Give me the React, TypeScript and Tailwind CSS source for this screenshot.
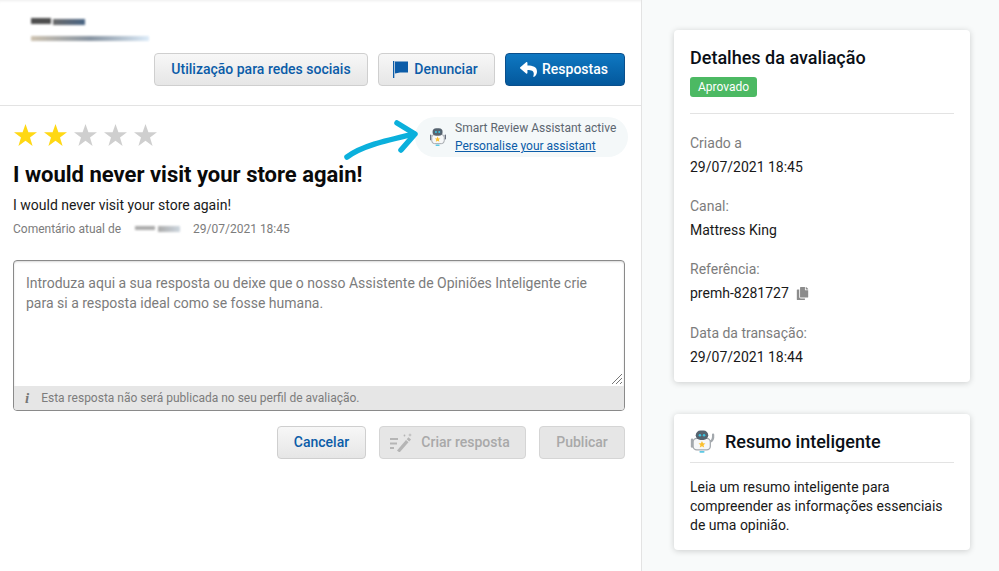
import { FaReply, FaCopy } from "react-icons/fa";

function Bot({ size = 24, wave }: { size?: number; wave?: boolean }) {
  return (
    <svg width={size} height={size} viewBox="0 0 24 24" className="shrink-0">
      {wave ? (
        <path d="M19 12c2.500 0 3.500-3 3.200-6.500" fill="none" stroke="#a3a8ad" strokeWidth="2.200" strokeLinecap="round" />
      ) : (
        <rect x="20" y="9" width="1.600" height="6" rx="0.800" fill="#6b7280" />
      )}
      {wave ? (
        <rect x="0.800" y="9" width="2.400" height="9" rx="1.200" fill="#a3a8ad" />
      ) : (
        <rect x="2.400" y="9" width="1.600" height="7" rx="0.800" fill="#6b7280" />
      )}
      <rect x={wave ? 3 : 4.500} y="9" width={wave ? 16.500 : 15} height="11" rx="3.500" fill="#f6f7f8" stroke="#a3a8ad" strokeWidth="1.200" />
      <rect x="5.500" y="1.500" width="12" height="9" rx="4.500" fill="#56636f" />
      <circle cx="9.500" cy="6" r="1.200" fill="#3cc4e0" />
      <circle cx="13.500" cy="6" r="1.200" fill="#3cc4e0" />
      <path d="M11.500 11.500l1 2.200 2.300.2-1.800 1.500.6 2.300-2.100-1.200-2.100 1.200.6-2.300-1.800-1.500 2.300-.2z" fill="#fbc02d" />
      <rect x="9" y="21" width="5" height="1.800" rx="0.900" fill="#5cc8e4" />
    </svg>
  );
}

function Wand() {
  return (
    <svg width="23" height="19" viewBox="0 0 23 19" fill="#b5b5b5" className="shrink-0">
      <rect x="0" y="5" width="8" height="2" />
      <rect x="0" y="9.500" width="7" height="2" />
      <rect x="0" y="14" width="4" height="2" />
      <path d="M7 17.500L16 7l2.500 2.200-9 10.300z" />
      <path d="M16.700 6.200l1.800-2 2.500 2.200-1.800 2z" />
      <path d="M20 0l.5 1.500 1.500.5-1.500.5-.5 1.500-.5-1.500-1.500-.5 1.500-.5z" />
      <circle cx="14.500" cy="2.500" r="0.900" />
    </svg>
  );
}

function Flag() {
  return (
    <svg width="15" height="17" viewBox="0 0 15 17" fill="#0b5ca8" className="shrink-0">
      <rect x="0" y="0" width="1.300" height="17" />
      <path d="M2 0.500H15V11.500H7L2 12.500z" />
    </svg>
  );
}

function Stars({ count }: { count: number }) {
  return (
    <div className="flex gap-[7px] pl-[1px] pt-[7px]">
      {[0, 1, 2, 3, 4].map((i) => (
        <svg key={i} width="23" height="22" viewBox="0 0 23 22" fill={i < count ? "#ffd814" : "#cfcfcf"}>
          <path d="M11.500 0l2.900 8.200H23l-7 5.200 2.600 8.600-7.100-5.200L4.400 22 7 13.400 0 8.200h8.600z" />
        </svg>
      ))}
    </div>
  );
}

function Detail({ label, value, copy, last }: { label: string; value: string; copy?: boolean; last?: boolean }) {
  return (
    <div className={last ? "mt-[20px]" : "mb-[19px]"}>
      <div className="text-[14px] leading-[20px] text-[#7c7c7c]">{label}</div>
      <div className="mt-[4px] flex items-center text-[14px] leading-[20px] text-[#191919]">
        {value}
        {copy && <FaCopy size={13} className="ml-[7px] text-[#8c8c8c]" />}
      </div>
    </div>
  );
}

const btn =
  "flex h-[33px] items-center justify-center rounded-[4px] border border-[#cfcfcf] bg-gradient-to-b from-[#f7f7f7] to-[#e6e6e6] text-[14px] font-medium text-[#0b5ca8]";

export default function App() {
  return (
    <div className="flex h-[571px] w-[999px] overflow-hidden bg-[#f8fafa] font-['Roboto',sans-serif]">
      <div className="relative w-[642px] shrink-0 border-r border-[#e3e3e3] bg-white shadow-[inset_0_3px_3px_-2px_rgba(0,0,0,0.07)]">
        <div className="h-[106px] border-b border-[#e3e3e3] pr-[16px]">
          <div className="h-[53px] pl-[31px] pt-[18px]">
            <div className="flex h-[8px] w-[54px] gap-[2px] opacity-80 blur-[1px]">
              <div className="h-[6px] w-[20px] bg-[#222]" />
              <div className="mt-[1px] h-[6px] w-[32px] bg-gradient-to-r from-[#444] to-[#1c3f66]" />
            </div>
            <div className="mt-[10px] h-[5px] w-[118px] bg-gradient-to-r from-[#b9a98f] via-[#55677a] to-[#cfe4f7] opacity-70 blur-[1.2px]" />
          </div>
          <div className="flex justify-end gap-[10px]">
            <button className={`${btn} w-[214px]`}>Utilização para redes sociais</button>
            <button className={`${btn} w-[117px] gap-[6px] pr-[2px]`}>
              <Flag />
              Denunciar
            </button>
            <button className="flex h-[33px] w-[120px] items-center justify-center gap-[5px] rounded-[4px] border border-[#0a4f8c] bg-gradient-to-b from-[#0f78c2] to-[#04589c] pr-[2px] text-[14px] font-medium text-white">
              <FaReply size={17} />
              Respostas
            </button>
          </div>
        </div>

        <div className="px-[13px] pr-[16px]">
          <div className="flex items-start justify-between pt-[11px]">
            <Stars count={2} />
            <div className="mr-[-3px] flex h-[40px] w-[213px] items-center rounded-[20px] bg-[#f4f8f9] pl-[13px]">
              <Bot size={20} />
              <div className="ml-[7px] text-[12px] leading-[18px]">
                <div className="text-[#5c6670]">Smart Review Assistant active</div>
                <a className="text-[#0b5ca8] underline">Personalise your assistant</a>
              </div>
            </div>
          </div>

          <h1 className="mt-[4px] text-[22px] font-bold leading-[28px] text-[#0a0a0a]">
            I would never visit your store again!
          </h1>
          <p className="mt-[6px] text-[14px] leading-[20px] text-[#191919]">
            I would never visit your store again!
          </p>
          <div className="mt-[5px] flex items-center text-[12px] leading-[18px] text-[#7c7c7c]">
            Comentário atual de
            <span className="ml-[14px] mr-[12px] flex w-[46px] gap-[3px] opacity-70 blur-[1.2px]">
              <span className="h-[4px] w-[20px] bg-[#888]" />
              <span className="h-[6px] w-[22px] bg-gradient-to-r from-[#888] to-[#b9c6d2]" />
            </span>
            29/07/2021 18:45
          </div>

          <div className="mt-[22px] h-[151px] overflow-hidden rounded-[4px] border border-[#8a8a8a] bg-white shadow-[inset_0_1px_2px_rgba(0,0,0,0.15)]">
            <div className="relative h-[125px] px-[12px] pb-[11px] pt-[12px] text-[14px] leading-[20px] text-[#7c7c7c]">
              Introduza aqui a sua resposta ou deixe que o nosso Assistente de Opiniões Inteligente crie para si a resposta ideal como se fosse humana.
              <svg width="12" height="12" viewBox="0 0 12 12" className="absolute bottom-[1px] right-[1px]" stroke="#777" strokeWidth="1">
                <path d="M11 1L1 11M11 5L5 11M11 9L9 11" />
              </svg>
            </div>
            <div className="flex h-[24px] items-center bg-[#e6e6e6] pl-[11px] text-[12px] text-[#7c7c7c]">
              <span className="mr-[12px] font-['Liberation_Serif',serif] text-[15px] font-bold italic text-[#777]">i</span>
              Esta resposta não será publicada no seu perfil de avaliação.
            </div>
          </div>

          <div className="mt-[15px] flex justify-end gap-[13px]">
            <button className={`${btn} w-[89px]`}>Cancelar</button>
            <button className="flex h-[33px] w-[147px] items-center justify-center gap-[8px] rounded-[4px] border border-[#d5d5d5] bg-[#e6e6e6] pr-[5px] text-[14px] font-medium text-[#a9a9a9]">
              <Wand />
              Criar resposta
            </button>
            <button className="flex h-[33px] w-[86px] items-center justify-center rounded-[4px] border border-[#d5d5d5] bg-[#e6e6e6] text-[14px] font-medium text-[#a9a9a9]">
              Publicar
            </button>
          </div>
        </div>

        <svg width="90" height="60" viewBox="0 0 90 60" fill="none" className="absolute left-[340px] top-[112px]" stroke="#0bb0dc" strokeWidth="5.500" strokeLinecap="round" strokeLinejoin="round">
          <path d="M7 45C22 34 44 29 74 22" />
          <path d="M57 11L75 22L61 38" />
        </svg>
      </div>

      <div className="flex-1 px-[32px] pr-[29px] pt-[30px]">
        <div className="rounded-[4px] bg-white px-[16px] pb-[15px] pt-[16px] shadow-[0_1px_6px_rgba(0,0,0,0.18)]">
          <h2 className="text-[18px] font-medium leading-[24px] text-[#0a0f16]">Detalhes da avaliação</h2>
          <span className="mt-[7px] inline-block h-[20px] rounded-[3px] bg-[#4cb963] px-[8px] text-[12px] leading-[20px] text-white">
            Aprovado
          </span>
          <div className="mb-[19px] mt-[15px] border-t border-[#e3e3e3]" />
          <Detail label="Criado a" value="29/07/2021 18:45" />
          <Detail label="Canal:" value="Mattress King" />
          <Detail label="Referência:" value="premh-8281727" copy />
          <Detail label="Data da transação:" value="29/07/2021 18:44" last />
        </div>

        <div className="mt-[32px] rounded-[4px] bg-white px-[16px] pb-[15px] pt-[15px] shadow-[0_1px_6px_rgba(0,0,0,0.18)]">
          <div className="flex items-center gap-[10px] border-b border-[#e3e3e3] pb-[8px]">
            <Bot size={25} wave />
            <h2 className="text-[18px] font-medium leading-[24px] text-[#0a0f16]">Resumo inteligente</h2>
          </div>
          <p className="mt-[15px] text-[14px] leading-[19px] text-[#191919]">
            Leia um resumo inteligente para compreender as informações essenciais de uma opinião.
          </p>
        </div>
      </div>
    </div>
  );
}
